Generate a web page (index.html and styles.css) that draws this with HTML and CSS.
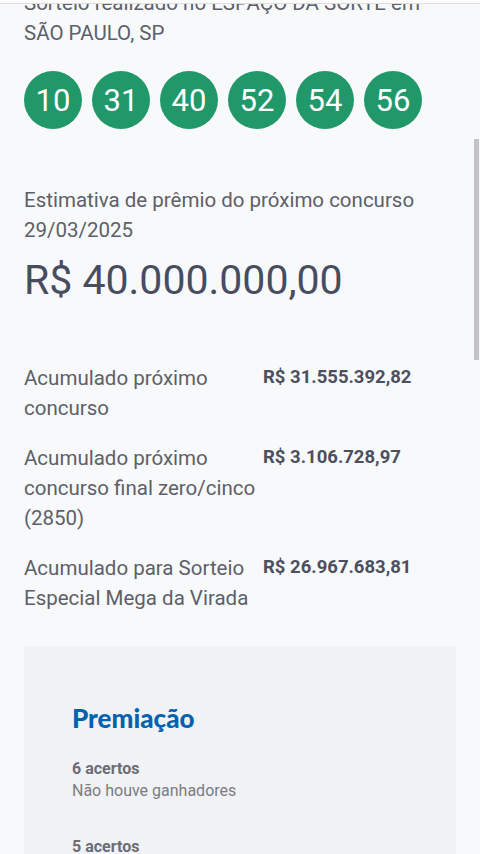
FILE: index.html
```html
<!DOCTYPE html>
<html lang="pt-BR">
<head>
    <meta charset="UTF-8">
    <title>Mega-Sena</title>
    <link rel="stylesheet" href="styles.css">
</head>
<body>
<div class="topbar"></div>
<div class="page">
    <p class="local">Sorteio realizado no ESPAÇO DA SORTE em SÃO PAULO, SP</p>
    <ul class="dezenas">
        <li>10</li>
        <li>31</li>
        <li>40</li>
        <li>52</li>
        <li>54</li>
        <li>56</li>
    </ul>
    <p class="estimativa">Estimativa de prêmio do próximo concurso 29/03/2025</p>
    <p class="valor">R$ 40.000.000,00</p>
    <div class="acumulados">
        <span class="label">Acumulado próximo concurso</span>
        <span class="money">R$ 31.555.392,82</span>
        <span class="label">Acumulado próximo concurso final zero/cinco (2850)</span>
        <span class="money">R$ 3.106.728,97</span>
        <span class="label">Acumulado para Sorteio Especial Mega da Virada</span>
        <span class="money">R$ 26.967.683,81</span>
    </div>
    <div class="premiacao">
        <h2>Premiação</h2>
        <div class="faixa">
            <strong>6 acertos</strong>
            <span>Não houve ganhadores</span>
        </div>
        <div class="faixa">
            <strong>5 acertos</strong>
            <span>88 apostas ganhadoras, R$ 40.711,33</span>
        </div>
    </div>
</div>
<div class="scrollbar"></div>
</body>
</html>
```

FILE: styles.css
```css
* {
    margin: 0;
    padding: 0;
}

body {
    background-color: #f8f9fb;
    font-family: Roboto, "Liberation Sans", sans-serif;
    color: #5d6069;
    overflow: hidden;
}

.topbar {
    position: fixed;
    top: 0;
    left: 0;
    right: 0;
    height: 3px;
    background-color: #fdfdfe;
    border-bottom: 1px solid #dcdde2;
    z-index: 2;
}

.scrollbar {
    position: fixed;
    top: 139px;
    right: 1px;
    width: 5px;
    height: 221px;
    background-color: #c3c3c6;
}

.page {
    padding: 0 24px;
}

.local {
    margin-top: -12px;
    font-size: 20.5px;
    line-height: 30px;
}

.dezenas {
    list-style: none;
    display: flex;
    gap: 10px;
    margin-top: 23px;
}
.dezenas li {
    width: 58px;
    height: 58px;
    border-radius: 50%;
    background-color: #209869;
    color: #fff;
    font-size: 31px;
    display: flex;
    align-items: center;
    justify-content: center;
}

.estimativa {
    margin-top: 56px;
    font-size: 20.5px;
    line-height: 30px;
}

.valor {
    margin-top: 11px;
    font-size: 41px;
    line-height: 48px;
    color: #474c60;
}

.acumulados {
    margin-top: 59px;
    display: grid;
    grid-template-columns: 239px 1fr;
    row-gap: 20px;
    font-size: 20.5px;
    line-height: 30px;
}
.acumulados .money {
    font-size: 18.5px;
    font-weight: bold;
    color: #4c4f5e;
    line-height: 28px;
}

.premiacao {
    margin-top: 33px;
    background-color: #f1f2f6;
    padding: 56px 48px 40px;
}
.premiacao h2 {
    font-family: Lato, "Open Sans", sans-serif;
    font-weight: 900;
    font-size: 26px;
    line-height: 32px;
    color: #0361ad;
}
.faixa {
    margin-top: 24px;
    font-size: 16px;
    line-height: 22px;
    color: #7a7c82;
}
.faixa + .faixa {
    margin-top: 34px;
}
.faixa strong {
    display: block;
    color: #6b6d73;
}
.faixa span {
    display: block;
}
```
